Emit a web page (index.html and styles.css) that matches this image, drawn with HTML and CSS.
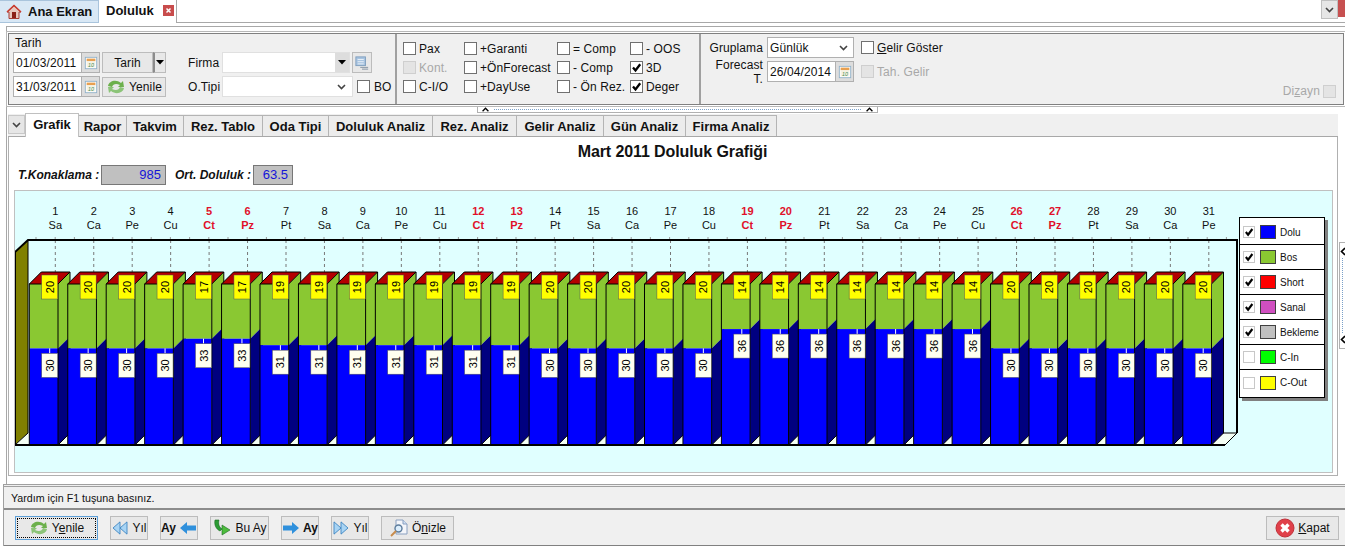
FILE: index.html
```html
<!DOCTYPE html>
<html lang="tr">
<head>
    <meta charset="UTF-8">
    <meta name="viewport" content="width=device-width, initial-scale=1.0">
    <title>Doluluk</title>
    <link rel="stylesheet" href="styles.css">
</head>
<body>
    <svg class="icon-defs" width="0" height="0">
        <symbol id="i-check" viewBox="0 0 11 11"><path d="M2 5.5 L4.5 8.5 L9.2 2.2" fill="none" stroke="#000" stroke-width="2.3"/></symbol>
        <symbol id="i-down" viewBox="0 0 9 6"><path d="M1 1 L4.5 4.5 L8 1" fill="none" stroke="#444" stroke-width="1.6"/></symbol>
        <symbol id="i-up" viewBox="0 0 9 6"><path d="M1 5 L4.5 1.5 L8 5" fill="none" stroke="#000" stroke-width="1.6"/></symbol>
        <symbol id="i-back" viewBox="0 0 6 9"><path d="M5 1 L1.5 4.5 L5 8" fill="none" stroke="#000" stroke-width="1.6"/></symbol>
        <symbol id="i-tri" viewBox="0 0 8 5"><path d="M0 0 H8 L4 4.5 Z" fill="#000"/></symbol>
        <symbol id="i-cal" viewBox="0 0 16 16">
            <rect x="1.5" y="1.5" width="13" height="13" fill="#fff" stroke="#8fb0c8"/>
            <rect x="3" y="3" width="10" height="3" fill="#e8a050"/>
            <rect x="3" y="6" width="10" height="7" fill="#f4f2e4"/>
        </symbol>
        <symbol id="i-refresh" viewBox="0 0 20 16">
            <path d="M2 7 C3 2 10 0 15 4 L17 2 L18 8 L12 8 L14 6 C10 4 7 5 6 8 Z" fill="#6cb04c"/>
            <path d="M18 9 C17 14 10 16 5 12 L3 14 L2 8 L8 8 L6 10 C10 12 13 11 14 8 Z" fill="#8cc478"/>
        </symbol>
        <symbol id="i-home" viewBox="0 0 16 16">
            <path d="M1 8 L8 1.5 L15 8 L13 8 L13 14.5 L3 14.5 L3 8 Z" fill="#e8c8c0" stroke="#a83c34"/>
            <rect x="6" y="8" width="4" height="6" fill="#8c2018"/>
            <path d="M1 8 L8 1.5 L15 8" fill="none" stroke="#c83c30" stroke-width="1.6"/>
        </symbol>
        <symbol id="i-close" viewBox="0 0 11 11">
            <rect width="11" height="11" fill="#c84c4c"/>
            <path d="M3.5 3.5 L7.5 7.5 M7.5 3.5 L3.5 7.5" stroke="#fff" stroke-width="1.5"/>
        </symbol>
        <symbol id="i-stop" viewBox="0 0 20 20">
            <circle cx="10" cy="10" r="9" fill="#e0404a" stroke="#c03038"/>
            <path d="M6.5 6.5 L13.5 13.5 M13.5 6.5 L6.5 13.5" stroke="#fff" stroke-width="3.4"/>
        </symbol>
        <symbol id="i-left" viewBox="0 0 18 14"><path d="M1 7 L8 1 V4.5 H17 V9.5 H8 V13 Z" fill="#2f90dc"/></symbol>
        <symbol id="i-right" viewBox="0 0 18 14"><path d="M17 7 L10 1 V4.5 H1 V9.5 H10 V13 Z" fill="#2f90dc"/></symbol>
        <symbol id="i-prev" viewBox="0 0 18 16">
            <path d="M9 1 V15 L1 8 Z M17 1 V15 L9 8 Z" fill="#a8d4f4" stroke="#3c84c0"/>
        </symbol>
        <symbol id="i-next" viewBox="0 0 18 16">
            <path d="M1 1 V15 L9 8 Z M9 1 V15 L17 8 Z" fill="#a8d4f4" stroke="#3c84c0"/>
        </symbol>
        <symbol id="i-today" viewBox="0 0 20 18">
            <path d="M3 1 L7 1 C6 5 7 8 10 10 L8 12 C4 10 2 6 3 1 Z" fill="#2c9c34" stroke="#1c6c24" stroke-width=".6"/>
            <path d="M10 6 L18 11 L10 16 Z" fill="#4cbc3c" stroke="#1c6c24" stroke-width=".6"/>
        </symbol>
        <symbol id="i-preview" viewBox="0 0 20 20">
            <path d="M7 2 H14 L18 6 V16 H7 Z" fill="#f4f6fa" stroke="#8aa0c0"/>
            <path d="M14 2 V6 H18" fill="#cfe0f4" stroke="#8aa0c0"/>
            <circle cx="9.5" cy="10.5" r="3.5" fill="#dceefc" stroke="#5c7c9c" stroke-width="1.4"/>
            <path d="M7 13 L2 18" stroke="#c88c4c" stroke-width="2"/>
        </symbol>
        <symbol id="i-list" viewBox="0 0 16 16">
            <rect x="1" y="1" width="11" height="10" fill="#a8c4e0" stroke="#7c9cbc"/>
            <path d="M3 4 H10 M3 6.5 H10 M3 9 H10" stroke="#eef4fa"/>
            <path d="M6 13 H15 M8 15 H15" stroke="#7c8c9c"/>
        </symbol>
    </svg>

    <header class="doctabs">
        <div class="doctab home"><svg class="ic16"><use href="#i-home"/></svg>Ana Ekran</div>
        <div class="doctab current">Doluluk<svg class="ic11"><use href="#i-close"/></svg></div>
        <div class="doc-menu"><svg class="ic-down"><use href="#i-down"/></svg></div>
        <div class="win-close"></div>
    </header>

    <div class="frame">
        <div class="work">
            <section class="filters">
                <div class="sec sec-date">
                    <div class="date-col">
                        <div class="caption">Tarih</div>
                        <div class="row">
                            <div class="field date"><span>01/03/2011</span><i class="cal"><svg class="ic14" viewBox="0 0 16 16"><use href="#i-cal"/><text x="8" y="12" class="cal-num">10</text></svg></i></div>
                            <div class="btn mid">Tarih</div>
                            <div class="btn drop"><svg class="ic-tri"><use href="#i-tri"/></svg></div>
                        </div>
                        <div class="row">
                            <div class="field date"><span>31/03/2011</span><i class="cal"><svg class="ic14" viewBox="0 0 16 16"><use href="#i-cal"/><text x="8" y="12" class="cal-num">10</text></svg></i></div>
                            <div class="btn yenile-sm"><svg class="ic-ref"><use href="#i-refresh"/></svg>Yenile</div>
                        </div>
                    </div>
                    <div class="firm-col">
                        <div class="row">
                            <label class="lbl">Firma</label>
                            <div class="field firma"><i class="combo-btn"><svg class="ic-tri"><use href="#i-tri"/></svg></i></div>
                            <div class="btn list"><svg class="ic14"><use href="#i-list"/></svg></div>
                        </div>
                        <div class="row">
                            <label class="lbl">O.Tipi</label>
                            <div class="field otipi"><svg class="ic-down"><use href="#i-down"/></svg></div>
                            <span class="cb"></span><span class="cb-text">BO</span>
                        </div>
                    </div>
                </div>

                <div class="sec sec-checks">
                    <div class="ck"><span class="cb"></span>Pax</div>
                    <div class="ck"><span class="cb"></span>+Garanti</div>
                    <div class="ck"><span class="cb"></span>= Comp</div>
                    <div class="ck"><span class="cb"></span>- OOS</div>
                    <div class="ck off"><span class="cb"></span>Kont.</div>
                    <div class="ck"><span class="cb"></span>+ÖnForecast</div>
                    <div class="ck"><span class="cb"></span>- Comp</div>
                    <div class="ck"><span class="cb"><svg><use href="#i-check"/></svg></span>3D</div>
                    <div class="ck"><span class="cb"></span>C-I/O</div>
                    <div class="ck"><span class="cb"></span>+DayUse</div>
                    <div class="ck"><span class="cb"></span>- Ön Rez.</div>
                    <div class="ck"><span class="cb"><svg><use href="#i-check"/></svg></span>Deger</div>
                </div>

                <div class="sec sec-group">
                    <div class="group-grid">
                        <label class="lbl-r">Gruplama</label>
                        <div class="field select"><span>Günlük</span><svg class="ic-down"><use href="#i-down"/></svg></div>
                        <div class="ck"><span class="cb"></span><span><u>G</u>elir Göster</span></div>
                        <label class="lbl-r">Forecast T.</label>
                        <div class="field date"><span>26/04/2014</span><i class="cal"><svg class="ic14" viewBox="0 0 16 16"><use href="#i-cal"/><text x="8" y="12" class="cal-num">10</text></svg></i></div>
                        <div class="ck off"><span class="cb"></span>Tah. Gelir</div>
                    </div>
                    <div class="ck off dizayn"><span>Di<u>z</u>ayn</span><span class="cb"></span></div>
                </div>
            </section>

            <div class="splitter"><svg class="ic-down"><use href="#i-up"/></svg><i></i><svg class="ic-down"><use href="#i-up"/></svg></div>

            <div class="body-row">
                <div class="tabbed">
                    <nav class="tabs">
                        <div class="tabs-menu"><svg class="ic-down"><use href="#i-down"/></svg></div>
                        <div class="tab active">Grafik</div>
                        <div class="tab t-rapor">Rapor</div>
                        <div class="tab t-takvim">Takvim</div>
                        <div class="tab t-tablo">Rez. Tablo</div>
                        <div class="tab t-oda">Oda Tipi</div>
                        <div class="tab t-dol">Doluluk Analiz</div>
                        <div class="tab t-rez">Rez. Analiz</div>
                        <div class="tab t-gelir">Gelir Analiz</div>
                        <div class="tab t-gun">Gün Analiz</div>
                        <div class="tab t-firma">Firma Analiz</div>
                    </nav>
                    <main class="panel">
                        <h1 class="title">Mart 2011 Doluluk Grafiği</h1>
                        <div class="stats">
                            <em class="t-konak">T.Konaklama :</em><span class="stat wide">985</span>
                            <em class="t-ort">Ort. Doluluk :</em><span class="stat">63.5</span>
                        </div>
                        <div class="chart" id="chart">
                            <ul class="legend">
                                <li><span class="lg-cb on"><svg><use href="#i-check"/></svg></span><span class="sw sw-dolu"></span>Dolu</li>
                                <li><span class="lg-cb on"><svg><use href="#i-check"/></svg></span><span class="sw sw-bos"></span>Bos</li>
                                <li><span class="lg-cb on"><svg><use href="#i-check"/></svg></span><span class="sw sw-short"></span>Short</li>
                                <li><span class="lg-cb on"><svg><use href="#i-check"/></svg></span><span class="sw sw-sanal"></span>Sanal</li>
                                <li><span class="lg-cb on"><svg><use href="#i-check"/></svg></span><span class="sw sw-bekle"></span>Bekleme</li>
                                <li><span class="lg-cb"></span><span class="sw sw-cin"></span>C-In</li>
                                <li><span class="lg-cb"></span><span class="sw sw-cout"></span>C-Out</li>
                            </ul>
                        </div>
                    </main>
                </div>
                <div class="side-split"><svg class="ic-back"><use href="#i-back"/></svg><i></i><svg class="ic-back"><use href="#i-back"/></svg></div>
            </div>
        </div>
    </div>

    <footer class="footer">
        <div class="status">Yardım için F1 tuşuna basınız.</div>
        <div class="toolbar">
            <div class="btn tb focus w-yenile"><span class="focus-in"><svg class="ic-ref"><use href="#i-refresh"/></svg><span>Y<u>e</u>nile</span></span></div>
            <div class="btn tb w-s"><svg class="ic-nav"><use href="#i-prev"/></svg>Yıl</div>
            <div class="btn tb w-s"><strong>Ay</strong><svg class="ic-nav"><use href="#i-left"/></svg></div>
            <div class="btn tb w-buay"><svg class="ic-nav big"><use href="#i-today"/></svg>Bu Ay</div>
            <div class="btn tb w-s"><svg class="ic-nav"><use href="#i-right"/></svg><strong>Ay</strong></div>
            <div class="btn tb w-s"><svg class="ic-nav"><use href="#i-next"/></svg>Yıl</div>
            <div class="btn tb w-oniz"><svg class="ic-nav big"><use href="#i-preview"/></svg><span>Ö<u>n</u>izle</span></div>
            <div class="btn tb w-kapat"><svg class="ic-stop"><use href="#i-stop"/></svg><span><u>K</u>apat</span></div>
        </div>
    </footer>

    <script src="chart.js"></script>
</body>
</html>
```

FILE: styles.css
```css
* {
    margin: 0;
    padding: 0;
    box-sizing: border-box;
}
body {
    width: 1345px;
    height: 547px;
    overflow: hidden;
    background: #fff;
    font-family: "Liberation Sans", Arial, sans-serif;
    font-size: 12px;
    color: #111;
}
.icon-defs {
    position: absolute;
}
u {
    text-decoration: underline;
}
svg {
    display: block;
    flex: none;
}
.ic16 { width: 16px; height: 16px; }
.ic14 { width: 14px; height: 14px; }
.ic11 { width: 11px; height: 11px; }
.ic-down { width: 9px; height: 6px; }
.ic-back { width: 6px; height: 9px; }
.ic-tri { width: 8px; height: 5px; }
.ic-ref { width: 20px; height: 16px; }
.ic-nav { width: 18px; height: 14px; }
.ic-nav.big { width: 20px; height: 20px; }
.ic-stop { width: 20px; height: 20px; }
.cal-num {
    font-size: 6px;
    text-anchor: middle;
    fill: #3c8a50;
}

/* top document tabs */
.doctabs {
    display: flex;
    height: 23px;
    border-bottom: 1px solid #a8a8a8;
}
.doctab {
    display: flex;
    align-items: center;
    font-size: 13px;
    font-weight: bold;
}
.doctab.home {
    width: 99px;
    padding-left: 6px;
    gap: 6px;
    background: #d9e8f5;
    border: 1px solid #a9c4dc;
    border-width: 1px 1px 1px 0;
    height: 23px;
}
.doctab.current {
    width: 78px;
    padding-left: 7px;
    gap: 9px;
    height: 23px;
    background: #fff;
    border-right: 1px solid #a8a8a8;
    padding-bottom: 2px;
}
.doc-menu {
    margin-left: auto;
    width: 17px;
    height: 19px;
    display: flex;
    align-items: center;
    justify-content: center;
    background: #e6e6e6;
    border: 1px solid #c0c0c0;
}
.win-close {
    width: 7px;
    height: 17px;
    background: #c75050;
}

/* main frame */
.frame {
    margin: 3px 0 0 6px;
    height: 458px;
    border: 1px solid #a8a8a8;
    border-width: 1px 0 0 1px;
    padding: 6px 0 0 1px;
}
.filters {
    display: flex;
    width: 1336px;
    height: 72px;
    letter-spacing: .1px;
    background: #f0f0f0;
    border: 1px solid #808080;
    outline: 1px solid #b8b8b8;
    outline-offset: 1px;
}
.sec {
    flex: none;
}
.sec-date {
    width: 388px;
    display: flex;
    padding: 3px 0 0 4px;
    border-right: 2px solid #a0a0a0;
}
.date-col {
    width: 153px;
}
.caption {
    height: 15px;
    line-height: 13px;
    padding-left: 2px;
}
.row {
    display: flex;
    align-items: center;
    height: 21px;
    margin-bottom: 3px;
}
.field {
    display: flex;
    align-items: center;
    height: 21px;
    background: #fff;
    border: 1px solid #c8c8c8;
}
.field.date {
    width: 87px;
    padding-left: 2px;
    justify-content: space-between;
    border-color: #b0b0b0;
}
.cal {
    width: 18px;
    height: 19px;
    display: flex;
    align-items: center;
    justify-content: center;
    background: #ddd;
    border-left: 1px solid #b0b0b0;
}
.btn {
    display: flex;
    align-items: center;
    justify-content: center;
    background: #e8e8e8;
    border: 1px solid #bcbcbc;
}
.btn.mid {
    width: 51px;
    height: 21px;
    margin-left: 2px;
}
.btn.drop {
    width: 13px;
    height: 21px;
    border-left: 2px solid #8c8c8c;
}
.btn.yenile-sm {
    width: 64px;
    height: 20px;
    margin-left: 2px;
    gap: 3px;
}
.firm-col {
    margin-left: 22px;
    padding-top: 15px;
}
.lbl {
    width: 34px;
}
.field.firma {
    width: 128px;
    justify-content: flex-end;
    border-color: #e0e0e0;
}
.combo-btn {
    width: 14px;
    height: 19px;
    display: flex;
    align-items: center;
    justify-content: center;
    background: #ddd;
}
.btn.list {
    width: 20px;
    height: 21px;
    margin-left: 2px;
}
.field.otipi {
    width: 131px;
    justify-content: flex-end;
    padding-right: 6px;
    border-color: #e0e0e0;
}
.cb {
    flex: none;
    width: 13px;
    height: 13px;
    background: #fff;
    border: 1px solid #707070;
    display: inline-flex;
    align-items: center;
    justify-content: center;
}
.cb svg {
    width: 11px;
    height: 11px;
}
.firm-col .cb {
    margin-left: 4px;
}
.cb-text {
    margin-left: 4px;
}
.sec-checks {
    width: 304px;
    display: grid;
    grid-template-columns: 61px 93px 73px 1fr;
    grid-auto-rows: 19px;
    padding: 5px 0 0 6px;
    border-right: 2px solid #a0a0a0;
}
.ck {
    display: flex;
    align-items: center;
    gap: 3px;
    white-space: nowrap;
}
.ck.off {
    color: #a8a8a8;
}
.ck.off .cb {
    background: #e4e4e4;
    border-color: #cfcfcf;
}
.sec-group {
    flex: 1;
    display: flex;
    flex-direction: column;
    padding: 3px 7px 0 2px;
}
.group-grid {
    display: grid;
    grid-template-columns: 60px 87px auto;
    grid-auto-rows: 21px;
    row-gap: 3px;
    column-gap: 4px;
    align-items: center;
    justify-content: start;
}
.lbl-r {
    text-align: right;
}
.field.select {
    justify-content: space-between;
    padding: 0 5px 0 2px;
    border-color: #b0b0b0;
}
.group-grid .ck {
    margin-left: 3px;
}
.dizayn {
    align-self: flex-end;
    margin-top: 2px;
}

.splitter {
    display: flex;
    justify-content: space-between;
    align-items: center;
    width: 401px;
    height: 7px;
    margin: 1px 0 1px 469px;
    padding: 0 3px;
    border: 1px solid #b0b0b0;
    border-top-color: #999;
    overflow: hidden;
}
.splitter svg {
    height: 5px;
}
.splitter i {
    flex: 1;
    margin: 0 4px;
    border-top: 1px dotted #7aa0c8;
}

.body-row {
    display: flex;
}
.tabbed {
    width: 1330px;
}
.tabs {
    display: flex;
    align-items: flex-end;
    height: 23px;
    background: #f0f0f0;
    border-bottom: 1px solid #a8a8a8;
}
.tabs-menu {
    align-self: flex-start;
    width: 17px;
    height: 19px;
    margin-top: 1px;
    display: flex;
    align-items: center;
    justify-content: center;
    background: #e6e6e6;
    border: 1px solid #c8c8c8;
}
.tab {
    flex: none;
    height: 21px;
    display: flex;
    align-items: center;
    justify-content: center;
    font-size: 13px;
    font-weight: bold;
    background: #ececec;
    border: 1px solid #b4b4b4;
    border-width: 1px 1px 0 0;
}
.tab.active {
    width: 54px;
    height: 24px;
    margin-bottom: -1px;
    padding-bottom: 3px;
    background: #fff;
    border-width: 1px 1px 0 1px;
    border-color: #c0c0c0;
    position: relative;
}
.t-rapor { width: 48px; }
.t-takvim { width: 57px; }
.t-tablo { width: 79px; }
.t-oda { width: 66px; }
.t-dol { width: 104px; }
.t-rez { width: 84px; }
.t-gelir { width: 87px; }
.t-gun { width: 82px; }
.t-firma { width: 91px; }

.panel {
    height: 339px;
    padding: 0 3px 3px 5px;
    border: 1px solid #b0b0b0;
    border-top: 0;
}
.title {
    height: 28px;
    line-height: 29px;
    padding-right: 3px;
    text-align: center;
    font-size: 16px;
    letter-spacing: -.1px;
    font-weight: bold;
    color: #111;
}
.stats {
    display: flex;
    align-items: center;
    height: 20px;
    padding-left: 4px;
    margin-bottom: 5px;
    font-weight: bold;
}
.stats em {
    font-style: italic;
}
.t-konak {
    width: 83px;
}
.t-ort {
    width: 78px;
    margin-left: 9px;
}
.stat {
    width: 40px;
    height: 20px;
    line-height: 18px;
    padding-right: 4px;
    text-align: right;
    font-size: 13px;
    font-weight: normal;
    color: #1414d8;
    background: #c0c0c0;
    border: 1px solid #777;
}
.stat.wide {
    width: 65px;
}
.chart {
    position: relative;
    width: 1319px;
    height: 283px;
    background: #e0ffff;
    border: 1px solid #c0c0c0;
    overflow: hidden;
}
.chart svg.plot {
    position: absolute;
    left: -1px;
    top: -1px;
}
.legend {
    position: absolute;
    left: 1224px;
    top: 26px;
    width: 86px;
    height: 181px;
    padding-top: 2px;
    list-style: none;
    font-size: 10px;
    background: #fff;
    border: 1px solid #000;
    box-shadow: 3px 3px 0 #808080;
}
.legend li {
    display: flex;
    align-items: center;
    height: 25px;
    padding-left: 3px;
    border-bottom: 1px solid #000;
}
.legend li:last-child {
    border-bottom: 0;
}
.lg-cb {
    width: 12px;
    height: 12px;
    border: 1px solid #c8c8c8;
    margin-right: 5px;
}
.lg-cb svg {
    width: 10px;
    height: 10px;
}
.sw {
    width: 16px;
    height: 14px;
    margin-right: 4px;
    border: 1px solid #404040;
}
.sw-dolu { background: #0000ff; }
.sw-bos { background: #8ac832; }
.sw-short { background: #ff0000; }
.sw-sanal { background: #d04fc0; }
.sw-bekle { background: #c0c0c0; }
.sw-cin { background: #00ff00; }
.sw-cout { background: #ffff00; }

.side-split {
    display: flex;
    flex-direction: column;
    align-items: center;
    width: 6px;
    height: 107px;
    margin: 128px 0 0 1px;
    padding: 4px 0;
    border: 1px solid #b0b0b0;
    border-right: 0;
}
.side-split i {
    flex: 1;
    margin: 2px 0;
    border-left: 1px dotted #7aa0c8;
}

/* footer */
.footer {
    margin-left: 3px;
    border-top: 3px double #a0a0a0;
    border-left: 1px solid #a0a0a0;
    background: #f0f0f0;
}
.status {
    height: 23px;
    line-height: 22px;
    padding-left: 7px;
    font-size: 10.7px;
    border-bottom: 2px solid #8c8c8c;
}
.toolbar {
    display: flex;
    gap: 12px;
    height: 36px;
    padding: 6px 6px 0 11px;
    border-bottom: 1px solid #808080;
}
.btn.tb {
    height: 24px;
    gap: 3px;
}
.btn.focus {
    border-color: #5c9fd8;
    padding: 1px;
}
.focus-in {
    display: flex;
    align-items: center;
    justify-content: center;
    gap: 3px;
    width: 100%;
    height: 100%;
    border: 1px dotted #000;
}
.w-yenile { width: 83px; }
.w-s { width: 38px; }
.w-buay { width: 59px; }
.w-oniz { width: 73px; }
.w-kapat {
    width: 73px;
    margin-left: auto;
    gap: 4px;
}
```

FILE: chart.js
```js
// bar values per day of the month
let green = [20,20,20,20,17,17,19,19,19,19,19,19,19,20,20,20,20,20,14,14,14,14,14,14,14,20,20,20,20,20,20];
let blue = [30,30,30,30,33,33,31,31,31,31,31,31,31,30,30,30,30,30,36,36,36,36,36,36,36,30,30,30,30,30,30];
let days = ['Sa','Ca','Pe','Cu','Ct','Pz','Pt'];

let startX = 29.3;
let pitch = 38.45;
let barW = 28.7;
let depth = 12;
let floorY = 445;
let unit = 3.22;

let out = '';

function poly(points, fill){
    return '<polygon points="' + points + '" fill="' + fill + '"/>';
}
function label(cx, cy, text, fill){
    let s = '<rect x="' + (cx-8) + '" y="' + (cy-12) + '" width="16" height="24" fill="' + fill + '" stroke="#555" stroke-width=".5"/>';
    s += '<text class="val" transform="translate(' + (cx+4) + ',' + cy + ') rotate(-90)" text-anchor="middle">' + text + '</text>';
    return s;
}

// walls and floor
out += poly('15,252 28,240 28,433 15,445', '#808000');
out += poly('15,445 28,433 1237,433 1225,445', '#f4fff4');
out += '<path d="M28 240 V433 M15 445 L28 433 M1225 445 L1237 433 M1212 433 H1237" stroke="#000" fill="none"/>';

// minor ticks on top edge
for(let x=36;x<1237;x+=19.2){
    out += '<path d="M' + x + ' 237 V240" stroke="#999"/>';
}

// bars
for(let i=0;i<31;i++){
    let x = startX + i*pitch;
    let r = x + barW;
    let midY = floorY - blue[i]*unit;
    let topY = midY - green[i]*unit;
    let cx = x + 26;

    out += '<path d="M' + cx + ' 240 V' + (topY-depth) + '" stroke="#777" stroke-dasharray="3 3"/>';
    out += poly(x+','+topY+' '+r+','+topY+' '+(r+depth)+','+(topY-depth)+' '+(x+depth)+','+(topY-depth), '#b40000');
    out += poly(r+','+topY+' '+(r+depth)+','+(topY-depth)+' '+(r+depth)+','+(midY-depth)+' '+r+','+midY, '#8ac832');
    out += poly(r+','+midY+' '+(r+depth)+','+(midY-depth)+' '+(r+depth)+','+(floorY-depth)+' '+r+','+floorY, '#000080');
    out += '<rect x="'+x+'" y="'+topY+'" width="'+barW+'" height="'+(midY-topY)+'" fill="#8ac832"/>';
    out += '<rect x="'+x+'" y="'+midY+'" width="'+barW+'" height="'+(floorY-midY)+'" fill="#0000ff"/>';
    // outline
    out += '<path d="M'+x+' '+floorY+' V'+topY+' L'+(x+depth)+' '+(topY-depth)+' H'+(r+depth)+' V'+(floorY-depth)+' L'+r+' '+floorY+' V'+topY+' L'+(r+depth)+' '+(topY-depth)+' M'+x+' '+topY+' H'+r+'" fill="none" stroke="#000"/>';

    // day heading
    let cls = (i%7===4 || i%7===5) ? 'day red' : 'day';
    out += '<text class="'+cls+'" x="'+cx+'" y="215" text-anchor="middle">'+(i+1)+'</text>';
    out += '<text class="'+cls+'" x="'+cx+'" y="229" text-anchor="middle">'+days[i%7]+'</text>';
}

// value labels on top
for(let i=0;i<31;i++){
    let x = startX + i*pitch;
    let mx = x + 20.4;
    let midY = floorY - blue[i]*unit;
    out += label(mx, 287, green[i], '#ffff00');
    out += '<path d="M'+mx+' '+midY+' v5" stroke="#fff"/>';
    out += label(mx, midY+17, blue[i], '#fffff0');
}

// frame lines
out += '<path d="M15 252 V445 H1225" fill="none" stroke="#000" stroke-width="2"/>';
out += '<path d="M15 252 L28 240 H1237 V433" fill="none" stroke="#000" stroke-width="2"/>';

let svg = '<svg class="plot" width="1320" height="285" viewBox="14 190 1320 285">'
    + '<style>.day{font:11px "Liberation Sans",sans-serif;fill:#111}.day.red{fill:#e0102a;font-weight:bold}.val{font:11px "Liberation Sans",sans-serif;fill:#000}</style>'
    + out + '</svg>';
document.getElementById('chart').insertAdjacentHTML('afterbegin', svg);
```
